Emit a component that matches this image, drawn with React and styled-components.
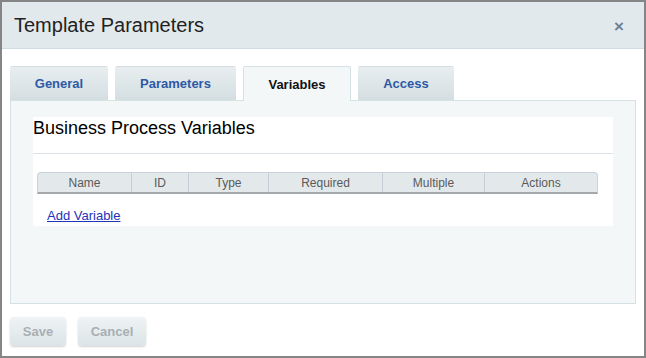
import React from "react";
import styled, { createGlobalStyle } from "styled-components";

const Global = createGlobalStyle`
  html, body { margin: 0; padding: 0; background: #fff; }
  body { font-family: "Liberation Sans", Arial, sans-serif; }
`;

const Dialog = styled.div`
  width: 646px;
  height: 358px;
  box-sizing: border-box;
  border: 2px solid #858585;
  background: #fff;
  display: flex;
  flex-direction: column;
`;

const Header = styled.div`
  height: 46px;
  background: #e2e9ec;
  border-bottom: 1px solid #d2dce0;
  display: flex;
  align-items: center;
  justify-content: space-between;
  padding: 0 20px 0 12px;
`;

const Title = styled.h1`
  margin: 0;
  font-size: 20px;
  font-weight: normal;
  color: #222;
`;

const Close = styled.span`
  font-size: 17px;
  font-weight: bold;
  color: #6f7f95;
  line-height: 1;
  margin-top: 2px;
`;

const Body = styled.div`
  flex: 1;
  display: flex;
  flex-direction: column;
  padding: 17px 8px 0 8px;
`;

const Tabs = styled.div`
  display: flex;
  gap: 7px;
  height: 34px;
  position: relative;
  z-index: 1;
`;

const Tab = styled.div`
  width: ${(p) => p.$w}px;
  box-sizing: border-box;
  display: flex;
  align-items: center;
  justify-content: center;
  font-size: 13px;
  font-weight: bold;
  color: ${(p) => (p.$active ? "#111" : "#2d5aa6")};
  background: ${(p) =>
    p.$active ? "#f3f7f8" : "linear-gradient(#e8eef0, #d4dee1)"};
  border: 1px solid ${(p) => (p.$active ? "#d6e1e6" : "transparent")};
  border-bottom: none;
  height: ${(p) => (p.$active ? 35 : 34)}px;
  border-radius: 2px 2px 0 0;
`;

const Panel = styled.div`
  height: 204px;
  box-sizing: border-box;
  background: #f3f7f8;
  border: 1px solid #d6e1e6;
  padding: 16px 22px 0 22px;
`;

const Card = styled.div`
  background: #fff;
  height: 109px;
  display: flex;
  flex-direction: column;
`;

const CardTitle = styled.h2`
  margin: 0;
  font-size: 18px;
  font-weight: normal;
  color: #000;
  height: 37px;
  line-height: 20px;
  padding-top: 1px;
  box-sizing: border-box;
  border-bottom: 1px solid #dce2e5;
`;

const Table = styled.div`
  margin: 18px 15px 0 4px;
  display: flex;
  height: 22px;
  box-sizing: border-box;
  background: #e3e9eb;
  border: 1px solid #c9d3df;
  border-bottom: 2px solid #a4a8ab;
  border-radius: 4px 4px 0 0;
`;

const Col = styled.div`
  width: ${(p) => p.$w}px;
  flex: ${(p) => (p.$grow ? 1 : "none")};
  box-sizing: border-box;
  border-left: ${(p) => (p.$first ? "none" : "1px solid #c6ced8")};
  font-size: 12px;
  color: #5a5a5a;
  display: flex;
  align-items: center;
  justify-content: center;
`;

const LinkRow = styled.div`
  padding: 12px 0 0 14px;
`;

const Link = styled.a`
  font-size: 13px;
  color: #2233bb;
  text-decoration: underline;
  cursor: pointer;
`;

const Footer = styled.div`
  display: flex;
  gap: 12px;
  padding-top: 13px;
`;

const Button = styled.button`
  width: ${(p) => p.$w}px;
  height: 29px;
  border: none;
  border-radius: 4px;
  background: linear-gradient(#eef3f5, #dce4e7);
  box-shadow: 0 1px 2px rgba(0, 0, 0, 0.18);
  font-family: "Liberation Sans", Arial, sans-serif;
  font-size: 13px;
  font-weight: bold;
  color: #a9afb3;
  padding: 0;
`;

const columns = [
  { label: "Name", w: 93 },
  { label: "ID", w: 57 },
  { label: "Type", w: 80 },
  { label: "Required", w: 114 },
  { label: "Multiple", w: 102 },
  { label: "Actions", grow: true },
];

const tabs = [
  { label: "General", w: 98 },
  { label: "Parameters", w: 121 },
  { label: "Variables", w: 108, active: true },
  { label: "Access", w: 96 },
];

export default function App() {
  return (
    <>
      <Global />
      <Dialog>
        <Header>
          <Title>Template Parameters</Title>
          <Close>×</Close>
        </Header>
        <Body>
          <Tabs>
            {tabs.map((t) => (
              <Tab key={t.label} $w={t.w} $active={t.active}>
                {t.label}
              </Tab>
            ))}
          </Tabs>
          <Panel>
            <Card>
              <CardTitle>Business Process Variables</CardTitle>
              <Table>
                {columns.map((c, i) => (
                  <Col key={c.label} $w={c.w} $grow={c.grow} $first={i === 0}>
                    {c.label}
                  </Col>
                ))}
              </Table>
              <LinkRow>
                <Link>Add Variable</Link>
              </LinkRow>
            </Card>
          </Panel>
          <Footer>
            <Button $w={56}>Save</Button>
            <Button $w={68}>Cancel</Button>
          </Footer>
        </Body>
      </Dialog>
    </>
  );
}
